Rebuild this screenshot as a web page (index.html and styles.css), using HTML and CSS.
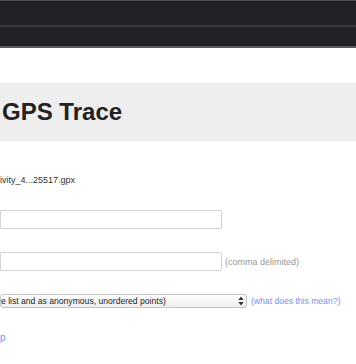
FILE: index.html
```html
<!DOCTYPE html>
<html lang="en">
<head>
    <meta charset="UTF-8">
    <title>Upload GPS Trace</title>
    <link rel="stylesheet" href="styles.css">
</head>
<body>

    <!-- Top navigation bars -->
    <div class="topbar">
        <div class="bar bar-main"></div>
        <div class="bar bar-sub"></div>
    </div>

    <div class="title-band">
        <h1>GPS Trace</h1>
    </div>

    <form class="upload-form">
        <div class="row file-row">ivity_4...25517.gpx</div>

        <div class="row field-row">
            <input type="text" class="text-input">
        </div>

        <div class="row field-row">
            <input type="text" class="text-input">
            <span class="hint">(comma delimited)</span>
        </div>

        <div class="row field-row">
            <span class="select-wrap">
                <select class="visibility">
                    <option>e list and as anonymous, unordered points)</option>
                </select>
                <svg class="select-arrows" width="6" height="10" viewBox="0 0 6 10">
                    <path d="M3 0.5 L5.6 4 L0.4 4 Z" fill="#333"/>
                    <path d="M3 9.5 L5.6 6 L0.4 6 Z" fill="#333"/>
                </svg>
            </span>
            <a href="#" class="help-link">(what does this mean?)</a>
        </div>

        <div class="row link-row"><a href="#">p</a></div>
    </form>

</body>
</html>
```

FILE: styles.css
```css
* {
    box-sizing: border-box;
}

html, body {
    overflow: hidden;
}

body {
    margin: 0;
    padding: 0;
    background-color: #fff;
    font-family: "Liberation Sans", Arial, sans-serif;
    color: #333;
}

/* Top bars */
.topbar {
    border-top: 1px solid #4c4c4e;
    border-bottom: 2px solid #5a5a5c;
}

.bar {
    background-color: #222226;
}

.bar-main {
    height: 26px;
    border-bottom: 2px solid #3a3a3e;
}

.bar-sub {
    height: 19px;
}

/* Heading band */
.title-band {
    margin-top: 35px;
    height: 58px;
    background-color: #eee;
}

.title-band h1 {
    margin: 0;
    padding-left: 2px;
    font-size: 24px;
    line-height: 58px;
    font-weight: bold;
    color: #222;
}

/* Form */
.upload-form {
    font-size: 9px;
}

.row {
    display: flex;
    align-items: center;
    white-space: nowrap;
}

.row > * {
    flex-shrink: 0;
}

.file-row {
    margin-top: 32px;
    height: 14px;
}

.field-row {
    margin-top: 23px;
}

.text-input {
    width: 222px;
    height: 19px;
    margin: 0;
    border: 1px solid #d4d4d4;
    border-radius: 1px;
    background: #fff;
    font-size: 11px;
}

.hint {
    margin-left: 3px;
    color: #999;
}

.select-wrap {
    position: relative;
    display: inline-block;
}

.visibility {
    -webkit-appearance: none;
    appearance: none;
    display: block;
    width: 247px;
    height: 14px;
    margin: 0;
    padding: 0 12px 0 0;
    border: 1px solid #c4c4c4;
    border-radius: 3px;
    background: linear-gradient(#fff, #eee);
    font-family: "Liberation Sans", Arial, sans-serif;
    font-size: 8.6px;
    line-height: 12px;
    color: #222;
}

.select-arrows {
    position: absolute;
    right: 3px;
    top: 2px;
}

.help-link {
    margin-left: 4px;
    font-size: 8.6px;
}

a {
    color: #7092ff;
    text-decoration: none;
}

.link-row {
    margin-top: 22px;
    height: 14px;
    font-size: 10px;
}
```
